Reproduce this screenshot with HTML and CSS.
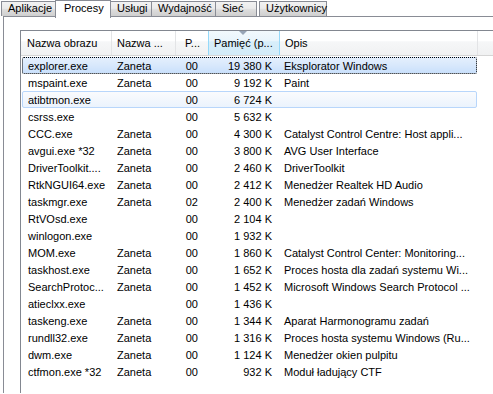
FILE: index.html
```html
<!DOCTYPE html>
<html lang="pl">
<head>
<meta charset="utf-8">
<title>Menedżer zadań</title>
<link rel="stylesheet" href="styles.css">
</head>
<body>
<div class="tabs">
  <div class="tab t1">Aplikacje</div>
  <div class="tab t2 active">Procesy</div>
  <div class="tab t3">Usługi</div>
  <div class="tab t4">Wydajność</div>
  <div class="tab t5">Sieć</div>
  <div class="tab t6">Użytkownicy</div>
</div>
<div class="panel">
  <div class="list">
    <div class="header">
      <div class="hc c1">Nazwa obrazu</div>
      <div class="hc c2">Nazwa ...</div>
      <div class="hc c3">P...</div>
      <div class="hc c4 sorted"><span class="arrow"></span>Pamięć (p...</div>
      <div class="hc c5">Opis</div>
      <div class="hc fill"></div>
    </div>
    <div class="rows">
      <div class="row selected"><div class="c c1">explorer.exe</div><div class="c c2">Zaneta</div><div class="c c3">00</div><div class="c c4">19 380 K</div><div class="c c5">Eksplorator Windows</div></div>
      <div class="row"><div class="c c1">mspaint.exe</div><div class="c c2">Zaneta</div><div class="c c3">00</div><div class="c c4">9 192 K</div><div class="c c5">Paint</div></div>
      <div class="row hover"><div class="c c1">atibtmon.exe</div><div class="c c2"></div><div class="c c3">00</div><div class="c c4">6 724 K</div><div class="c c5"></div></div>
      <div class="row"><div class="c c1">csrss.exe</div><div class="c c2"></div><div class="c c3">00</div><div class="c c4">5 632 K</div><div class="c c5"></div></div>
      <div class="row"><div class="c c1">CCC.exe</div><div class="c c2">Zaneta</div><div class="c c3">00</div><div class="c c4">4 300 K</div><div class="c c5">Catalyst Control Centre: Host appli...</div></div>
      <div class="row"><div class="c c1">avgui.exe *32</div><div class="c c2">Zaneta</div><div class="c c3">00</div><div class="c c4">3 800 K</div><div class="c c5">AVG User Interface</div></div>
      <div class="row"><div class="c c1">DriverToolkit....</div><div class="c c2">Zaneta</div><div class="c c3">00</div><div class="c c4">2 460 K</div><div class="c c5">DriverToolkit</div></div>
      <div class="row"><div class="c c1">RtkNGUI64.exe</div><div class="c c2">Zaneta</div><div class="c c3">00</div><div class="c c4">2 412 K</div><div class="c c5">Menedżer Realtek HD Audio</div></div>
      <div class="row"><div class="c c1">taskmgr.exe</div><div class="c c2">Zaneta</div><div class="c c3">02</div><div class="c c4">2 400 K</div><div class="c c5">Menedżer zadań Windows</div></div>
      <div class="row"><div class="c c1">RtVOsd.exe</div><div class="c c2"></div><div class="c c3">00</div><div class="c c4">2 104 K</div><div class="c c5"></div></div>
      <div class="row"><div class="c c1">winlogon.exe</div><div class="c c2"></div><div class="c c3">00</div><div class="c c4">1 932 K</div><div class="c c5"></div></div>
      <div class="row"><div class="c c1">MOM.exe</div><div class="c c2">Zaneta</div><div class="c c3">00</div><div class="c c4">1 860 K</div><div class="c c5">Catalyst Control Center: Monitoring...</div></div>
      <div class="row"><div class="c c1">taskhost.exe</div><div class="c c2">Zaneta</div><div class="c c3">00</div><div class="c c4">1 652 K</div><div class="c c5">Proces hosta dla zadań systemu Wi...</div></div>
      <div class="row"><div class="c c1">SearchProtoc...</div><div class="c c2">Zaneta</div><div class="c c3">00</div><div class="c c4">1 452 K</div><div class="c c5">Microsoft Windows Search Protocol ...</div></div>
      <div class="row"><div class="c c1">atieclxx.exe</div><div class="c c2"></div><div class="c c3">00</div><div class="c c4">1 436 K</div><div class="c c5"></div></div>
      <div class="row"><div class="c c1">taskeng.exe</div><div class="c c2">Zaneta</div><div class="c c3">00</div><div class="c c4">1 344 K</div><div class="c c5">Aparat Harmonogramu zadań</div></div>
      <div class="row"><div class="c c1">rundll32.exe</div><div class="c c2">Zaneta</div><div class="c c3">00</div><div class="c c4">1 316 K</div><div class="c c5">Proces hosta systemu Windows (Ru...</div></div>
      <div class="row"><div class="c c1">dwm.exe</div><div class="c c2">Zaneta</div><div class="c c3">00</div><div class="c c4">1 124 K</div><div class="c c5">Menedżer okien pulpitu</div></div>
      <div class="row"><div class="c c1">ctfmon.exe *32</div><div class="c c2">Zaneta</div><div class="c c3">00</div><div class="c c4">932 K</div><div class="c c5">Moduł ładujący CTF</div></div>
    </div>
  </div>
</div>
</body>
</html>
```

FILE: styles.css
```css
* { box-sizing: border-box; }
html, body {
  margin: 0;
  padding: 0;
  background: #ffffff;
  width: 493px;
  height: 394px;
  overflow: hidden;
  font-family: "Liberation Sans", Arial, sans-serif;
  font-size: 11px;
  color: #000;
}

.tabs {
  display: flex;
  align-items: flex-end;
  height: 17px;
  padding-left: 1px;
  position: relative;
  z-index: 2;
}
.tab {
  height: 15px;
  line-height: 13px;
  padding-left: 6px;
  border: 1px solid #898c95;
  border-bottom: none;
  background: linear-gradient(#f2f2f2, #ebebeb 45%, #dddddd 55%, #cfcfcf);
  white-space: nowrap;
  margin-bottom: 1px;
}
.tab + .tab { margin-left: -1px; }
.tab.active {
  height: 18px;
  background: #fff;
  padding-left: 8px;
  line-height: 14px;
  margin-bottom: -1px;
}
.t1 { width: 55px; }
.t2 { width: 56px; }
.t3 { width: 42px; }
.t4 { width: 65px; }
.t5 { width: 42px; }
.t6 { width: 68px; margin-left: 2px !important; }

.panel {
  margin-left: 3px;
  border-top: 1px solid #898c95;
  border-left: 1px solid #898c95;
  height: 377px;
  padding: 13px 0 0 16px;
  background: #fff;
  margin-top: -1px;
}

.list {
  border-top: 1px solid #828790;
  border-left: 1px solid #828790;
  height: 100%;
}

.header {
  display: flex;
  height: 25px;
  background: linear-gradient(#ffffff, #ffffff 40%, #f6f7f8 45%, #f0f1f2);
  border-bottom: 1px solid #d5d5d5;
}
.hc {
  height: 24px;
  line-height: 25px;
  border-right: 1px solid #e3e4e6;
  white-space: nowrap;
  overflow: hidden;
  flex: none;
}
.hc.c1 { width: 91px; padding-left: 6px; }
.hc.c2 { width: 64px; padding-left: 5px; }
.hc.c3 { width: 33px; text-align: right; padding-right: 8px; }
.hc.c4 { width: 71px; padding-left: 5px; }
.hc.c5 { width: 198px; padding-left: 5px; }
.hc.fill { flex: 1; border-right: none; }
.hc.sorted {
  position: relative;
  background: linear-gradient(#f2f9fd, #e9f5fc 40%, #d7eefa 45%, #d3ecf9);
  border-left: 1px solid #96d9f9;
  border-right: 1px solid #96d9f9;
  margin-left: -1px;
  width: 72px;
}
.arrow {
  position: absolute;
  left: 30px;
  top: 0;
  width: 0;
  height: 0;
  border-left: 4px solid transparent;
  border-right: 4px solid transparent;
  border-top: 4px solid #97a5b7;
}

.rows {
  padding-left: 1px;
  padding-top: 1px;
}
.row {
  display: flex;
  height: 17px;
  width: 455px;
  line-height: 16px;
  border: 1px solid transparent;
  border-radius: 2px;
  white-space: nowrap;
}
.row.selected {
  border: 1px dotted #000;
  background: linear-gradient(#e4effd, #d8e8fc 50%, #c9e0fc);
}
.row.hover {
  border: 1px solid #b8d6fb;
  background: linear-gradient(#fafbfd, #ebf3fd);
}
.c {
  flex: none;
  overflow: hidden;
}
.c.c1 { width: 89px; padding-left: 5px; }
.c.c2 { width: 64px; padding-left: 5px; }
.c.c3 { width: 33px; text-align: right; padding-right: 11px; }
.c.c4 { width: 71px; text-align: right; padding-right: 8px; }
.c.c5 { width: 196px; padding-left: 4px; }
```
